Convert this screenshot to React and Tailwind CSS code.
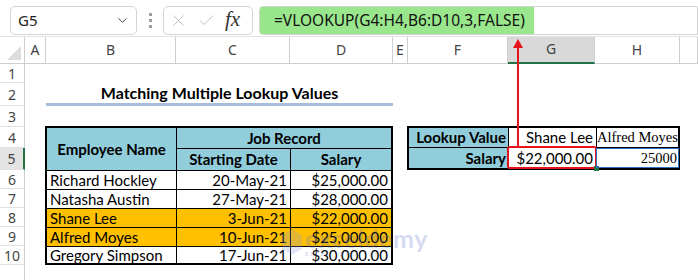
import { ChevronDown, X, Check } from 'lucide-react';

const COLS = ['A', 'B', 'C', 'D', 'E', 'F', 'G', 'H', ''];
const ROWS = [1, 2, 3, 4, 5, 6, 7, 8, 9, 10, ''];

const PEOPLE = [
  { name: 'Richard Hockley', date: '20-May-21', salary: '$25,000.00' },
  { name: 'Natasha Austin', date: '27-May-21', salary: '$28,000.00' },
  { name: 'Shane Lee', date: '3-Jun-21', salary: '$22,000.00', hl: true },
  { name: 'Alfred Moyes', date: '10-Jun-21', salary: '$25,000.00', hl: true },
  { name: 'Gregory Simpson', date: '17-Jun-21', salary: '$30,000.00' },
];

const cell = "font-['Lato',sans-serif] text-[15px] text-black leading-none whitespace-nowrap";
const serif = "font-['Liberation_Serif',serif] text-[14.5px] text-black leading-none whitespace-nowrap";

export default function App() {
  return (
    <div className="relative w-[698px] h-[280px] overflow-hidden bg-white font-['Noto_Sans',sans-serif]">
      {/* ── Formula bar ─────────────────────────────────────────── */}
      <div className="h-[37px] flex items-start pt-[6px] border-b border-[#e3e3e3]">
        <div className="ml-[10px] w-[127px] h-[29px] border border-[#d4d4d4] rounded-[5px] flex items-center justify-between pl-[7px] pr-[6px]">
          <span className="text-[15px] text-[#222]">G5</span>
          <ChevronDown className="w-[15px] h-[15px] text-[#444]" strokeWidth={1.6} />
        </div>
        <div className="w-[26px] h-[29px] flex flex-col items-center justify-center gap-[3px]">
          <span className="w-[3px] h-[3px] bg-[#9c9c9c]" />
          <span className="w-[3px] h-[3px] bg-[#9c9c9c]" />
          <span className="w-[3px] h-[3px] bg-[#9c9c9c]" />
        </div>
        <div className="w-[90px] h-[29px] border border-[#d4d4d4] rounded-[5px] flex items-center pl-[5px] gap-[9px]">
          <X className="w-[19px] h-[19px] text-[#bdbdbd]" strokeWidth={1.2} />
          <Check className="w-[19px] h-[19px] text-[#bdbdbd]" strokeWidth={1.2} />
          <span className="font-['Liberation_Serif',serif] italic text-[21px] text-[#333] leading-none -mt-[3px]">fx</span>
        </div>
        <div className="ml-[6px] flex-1 h-[29px] border border-[#d4d4d4] rounded-l-[5px] flex">
          <div className="w-[274px] h-full bg-[#99e68c] flex items-center pl-[14px]">
            <span className="text-[15.5px] text-[#111]">=VLOOKUP(G4:H4,B6:D10,3,FALSE)</span>
          </div>
        </div>
      </div>

      {/* ── Sheet ───────────────────────────────────────────────── */}
      <div className="grid grid-cols-[25px_21px_130px_114px_103px_15px_100px_87px_85px_18px] grid-rows-[27px_19px_23px_21px_21px_22px_19px_19px_19px_19px_19px_19px]">
        {/* corner */}
        <div className="col-start-1 row-start-1 border-r border-b border-[#cfcfcf] flex items-end justify-end pr-[3px] pb-[3px]">
          <div className="w-0 h-0 border-l-[14px] border-l-transparent border-b-[14px] border-b-[#dcdcdc]" />
        </div>
        {COLS.map((c, i) => (
          <div
            key={'c' + i}
            style={{ gridColumnStart: i + 2 }}
            className={
              'row-start-1 flex items-end justify-center pb-[3px] text-[14px] text-[#444] ' +
              (c === 'G'
                ? 'bg-[#d9d9d9] border-b-2 border-[#217346] border-r border-r-[#cfcfcf]'
                : 'border-b border-[#cfcfcf] border-r')
            }
          >
            {c}
          </div>
        ))}
        {ROWS.map((r, i) => (
          <div
            key={'r' + i}
            style={{ gridRowStart: i + 2 }}
            className={
              'col-start-1 flex items-center justify-center text-[14px] text-[#444] border-b border-[#e1e1e1] ' +
              (r === 5 ? 'bg-[#e3e3e3] border-r-2 border-r-[#217346]' : 'border-r border-r-[#cfcfcf]')
            }
          >
            {r}
          </div>
        ))}

        {/* title */}
        <div className="col-start-3 col-span-3 row-start-3 flex items-center justify-center border-b-[3px] border-[#a8bddb]">
          <span className="font-['Lato',sans-serif] font-bold text-[16px] text-black">Matching Multiple Lookup Values</span>
        </div>

        {/* main table */}
        <div className="col-start-3 col-span-3 row-start-5 row-span-7 -ml-px -mt-px border-2 border-black grid grid-cols-[129px_114px_1fr] grid-rows-[21px_22px_19px_19px_19px_19px_1fr]">
          <div className={cell + ' row-span-2 bg-[#92cddc] font-bold flex items-center justify-center border-b border-black'}>
            Employee Name
          </div>
          <div className={cell + ' col-span-2 bg-[#92cddc] font-bold flex items-center justify-center border-l border-b border-black'}>
            Job Record
          </div>
          <div className={cell + ' bg-[#92cddc] font-bold flex items-center justify-center border-l border-b border-black'}>
            Starting Date
          </div>
          <div className={cell + ' bg-[#92cddc] font-bold flex items-center justify-center border-l border-b border-black'}>
            Salary
          </div>
          {PEOPLE.map((p, i) => {
            const bg = p.hl ? 'bg-[#ffc000]' : 'bg-white';
            const bb = i < PEOPLE.length - 1 ? ' border-b border-black' : '';
            return [
              <div key={p.name + 'n'} className={cell + ' ' + bg + bb + ' flex items-center pl-[3px] text-[14px]'}>{p.name}</div>,
              <div key={p.name + 'd'} className={cell + ' ' + bg + bb + ' flex items-center justify-end pr-[3px] border-l border-l-black'}>{p.date}</div>,
              <div key={p.name + 's'} className={cell + ' ' + bg + bb + ' flex items-center justify-end pr-[3px] border-l border-l-black'}>{p.salary}</div>,
            ];
          })}
        </div>

        {/* lookup table */}
        <div className="col-start-7 col-span-3 row-start-5 row-span-2 -ml-px -mt-px border-2 border-black grid grid-cols-[99px_88px_1fr] grid-rows-[20px_1fr]">
          <div className={cell + ' bg-[#92cddc] font-bold flex items-center justify-end pr-[2px] border-b border-black'}>Lookup Value</div>
          <div className={cell + ' flex items-center justify-end pr-[3px] border-l border-b border-black'}>Shane Lee</div>
          <div className={serif + ' flex items-center justify-end pr-px border-l border-b border-black'}>Alfred Moyes</div>
          <div className={cell + ' bg-[#92cddc] font-bold flex items-center justify-end pr-[2px]'}>Salary</div>
          <div className={cell + ' relative flex items-center justify-end pr-[3px] border-l border-black'}>
            $22,000.00
            <div className="absolute -left-[2px] -top-[2px] -right-[1px] -bottom-[1px] border-2 border-[#e8141b] rounded-[3px]" />
            <div className="absolute -right-[3px] -bottom-[3px] w-[5px] h-[5px] bg-[#217346]" />
          </div>
          <div className={serif + ' relative flex items-center justify-end pr-[2px]'}>
            25000
            <div className="absolute inset-0 border border-[#2f6fc6]" />
          </div>
        </div>
      </div>

      {/* red arrow from formula to G5 */}
      <svg className="absolute left-[510px] top-[38px]" width="16" height="112" viewBox="0 0 16 112">
        <line x1="8" y1="8" x2="8" y2="110" stroke="#e8141b" strokeWidth="2" />
        <polygon points="8,1 3,10 13,10" fill="#e8141b" />
      </svg>

      {/* watermark */}
      <div className="absolute left-[282px] top-[226px] flex items-center gap-[3px] opacity-25 pointer-events-none">
        <svg width="20" height="26" viewBox="0 0 20 26">
          <polygon points="0,6 10,0 20,6 20,20 10,26 0,20" fill="#8a9ad8" />
        </svg>
        <div className="flex flex-col leading-none">
          <span className="font-['Lato',sans-serif] font-bold text-[25px] text-[#5a6fd0] tracking-[0.5px]">exceldemy</span>
          <span className="font-['Lato',sans-serif] font-bold text-[6px] text-[#5a6fd0] tracking-[1.5px]">EXCEL · DATA · BI</span>
        </div>
      </div>
    </div>
  );
}
